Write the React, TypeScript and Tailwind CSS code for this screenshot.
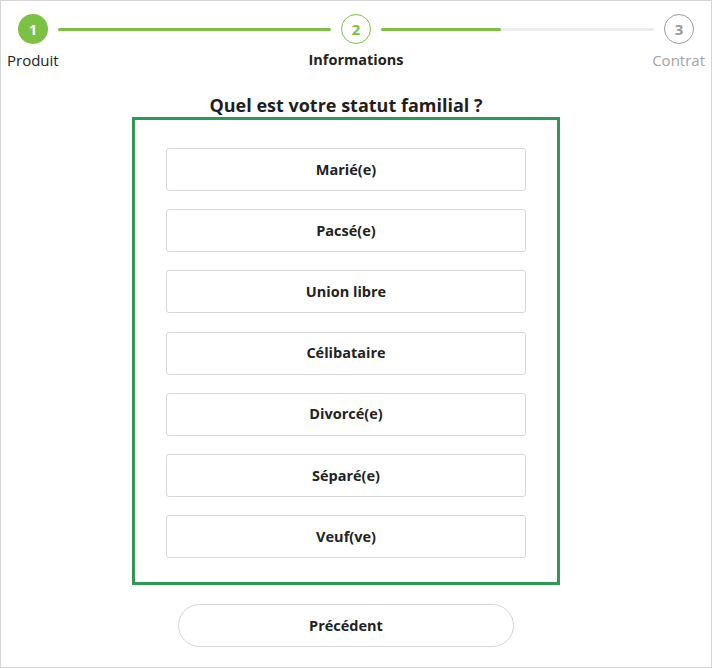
const options = [
  "Marié(e)",
  "Pacsé(e)",
  "Union libre",
  "Célibataire",
  "Divorcé(e)",
  "Séparé(e)",
  "Veuf(ve)",
]

const font = { fontFamily: '"Open Sans", "Liberation Sans", sans-serif' }

function Stepper() {
  return (
    <div className="px-[17px] pt-[13px]">
      <div className="flex items-center gap-[10px]">
        <div className="w-[30px] h-[30px] shrink-0 rounded-full bg-[#7bc144] text-white text-[15px] font-bold flex items-center justify-center">
          1
        </div>
        <div className="flex-1 h-[3px] rounded-full bg-[#7bc144]" />
        <div className="w-[30px] h-[30px] shrink-0 rounded-full border border-[#7bc144] text-[#7bc144] text-[15px] font-bold flex items-center justify-center">
          2
        </div>
        <div className="flex-1 h-[3px] rounded-full bg-[#ececec] flex">
          <div className="w-[44%] h-full rounded-full bg-[#7bc144]" />
        </div>
        <div className="w-[30px] h-[30px] shrink-0 rounded-full border border-[#9a9a9a] text-[#9a9a9a] text-[15px] font-bold flex items-center justify-center">
          3
        </div>
      </div>
      <div className="grid grid-cols-3 -mx-[11px] mt-[6px] text-[15px] leading-[20px]">
        <span className="text-left text-[#222]">Produit</span>
        <span className="text-center text-[14.5px] font-bold text-[#222]">Informations</span>
        <span className="text-right text-[#a3a3a3]">Contrat</span>
      </div>
    </div>
  )
}

export default function App() {
  return (
    <div
      style={font}
      className="w-[712px] h-[668px] border border-[#d4d4d4] bg-white text-[#222] overflow-hidden"
    >
      <Stepper />
      <div className="pl-[131px] mt-[24px] w-[559px]">
        <h1 className="text-center text-[18px] font-bold leading-[22px] text-[#1f1f1f]">
          Quel est votre statut familial ?
        </h1>
        <div className="mt-[1px] border-[3px] border-[#2a9a55] pt-[28px] pb-[24px] px-[31px] flex flex-col gap-[18.2px]">
          {options.map((o) => (
            <button
              key={o}
              className="h-[43px] w-full rounded-[3px] border border-[#d8d8d8] bg-white text-[14.5px] font-bold text-[#222]"
            >
              {o}
            </button>
          ))}
        </div>
        <div className="flex justify-center mt-[19px]">
          <button className="w-[336px] h-[43px] rounded-full border border-[#d4d4d4] bg-white text-[14.5px] font-bold text-[#222]">
            Précédent
          </button>
        </div>
      </div>
    </div>
  )
}
